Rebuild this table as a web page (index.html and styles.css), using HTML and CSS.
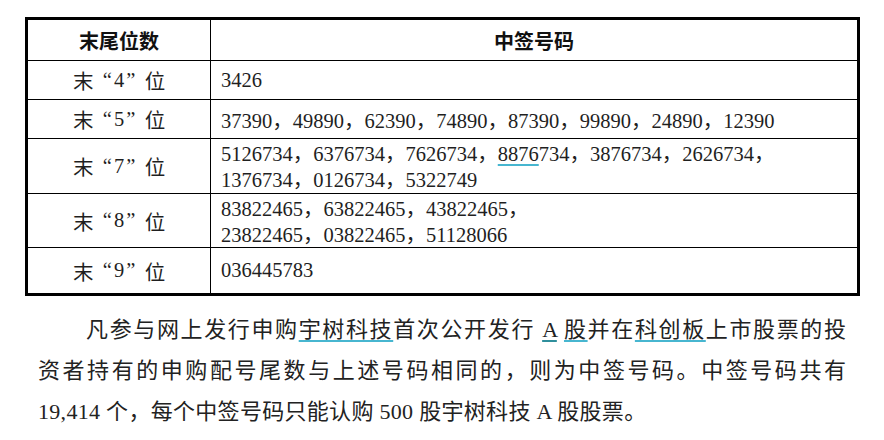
FILE: index.html
```html
<!DOCTYPE html>
<html lang="zh-CN">
<head>
<meta charset="utf-8">
<title>中签号码</title>
<link rel="stylesheet" href="styles.css">
</head>
<body>
<div class="doc">
  <div class="lottery">
    <div class="cell head key">末尾位数</div>
    <div class="cell head val">中签号码</div>

    <div class="cell key">末<span class="ql">“</span>4<span class="qr">”</span>位</div>
    <div class="cell val">3426</div>

    <div class="cell key">末<span class="ql">“</span>5<span class="qr">”</span>位</div>
    <div class="cell val">37390，49890，62390，74890，87390，99890，24890，12390</div>

    <div class="cell key">末<span class="ql">“</span>7<span class="qr">”</span>位</div>
    <div class="cell val multi">5126734，6376734，7626734，<span class="mark">8876</span>734，3876734，2626734，<br>1376734，0126734，5322749</div>

    <div class="cell key">末<span class="ql">“</span>8<span class="qr">”</span>位</div>
    <div class="cell val multi">83822465，63822465，43822465，<br>23822465，03822465，51128066</div>

    <div class="cell key last">末<span class="ql">“</span>9<span class="qr">”</span>位</div>
    <div class="cell val last">036445783</div>
  </div>

  <p class="para">
    <span class="line first">凡参与网上发行申购<span class="mark">宇树科技</span>首次公开发行 <span class="mark dark">A</span> <span class="mark">股</span>并在<span class="mark">科创板</span>上市股票的投</span>
    <span class="line">资者持有的申购配号尾数与上述号码相同的，则为中签号码。中签号码共有</span>
    <span class="line tail">19,414 个，每个中签号码只能认购 500 股宇树科技 A 股股票。</span>
  </p>
</div>
</body>
</html>
```

FILE: styles.css
```css
html, body {
  margin: 0;
  padding: 0;
  background: #ffffff;
}

body {
  font-family: "Liberation Serif", "Noto Sans CJK SC", serif;
  color: #1f1f1f;
}

.doc {
  width: 884px;
  height: 440px;
  overflow: hidden;
  padding-top: 17px;
  box-sizing: border-box;
}

.lottery {
  margin-left: 25px;
  width: 835px;
  box-sizing: border-box;
  border: 3px solid #000;
  display: grid;
  grid-template-columns: 183px 1fr;
  grid-template-rows: 41px 39px 39px 55px 54px 45px;
  font-size: 20.5px;
}

.cell {
  box-sizing: border-box;
  border-bottom: 1px solid #000;
  display: flex;
  align-items: center;
  white-space: nowrap;
}

.cell.last {
  border-bottom: none;
}

.key {
  border-right: 1px solid #000;
  justify-content: center;
}

.val {
  padding-left: 10px;
}

.multi {
  display: block;
  line-height: 26px;
  padding-top: 2px;
}

.head {
  font-family: "Noto Sans CJK SC", sans-serif;
  font-weight: 700;
  font-size: 20px;
  color: #111;
  justify-content: center;
  padding-left: 0;
}

.ql, .qr {
  display: inline-block;
  width: 1em;
}

.ql {
  text-align: right;
  padding-right: 2px;
  box-sizing: border-box;
}

.qr {
  text-align: left;
  padding-left: 2px;
  box-sizing: border-box;
}

.mark {
  text-decoration: underline;
  text-decoration-color: #47b6d0;
  text-decoration-thickness: 2px;
  text-underline-offset: 3px;
}

.mark.dark {
  text-decoration-color: #2f8f9c;
}

.para {
  margin: 13px 0 0 38px;
  width: 808px;
  font-size: 22px;
  line-height: 41px;
  color: #222;
}

.line {
  display: block;
  text-align: justify;
  text-align-last: justify;
  white-space: nowrap;
}

.line.first {
  text-indent: 48px;
}

.line.tail {
  text-align: left;
  text-align-last: left;
  letter-spacing: 0.3px;
}
```
